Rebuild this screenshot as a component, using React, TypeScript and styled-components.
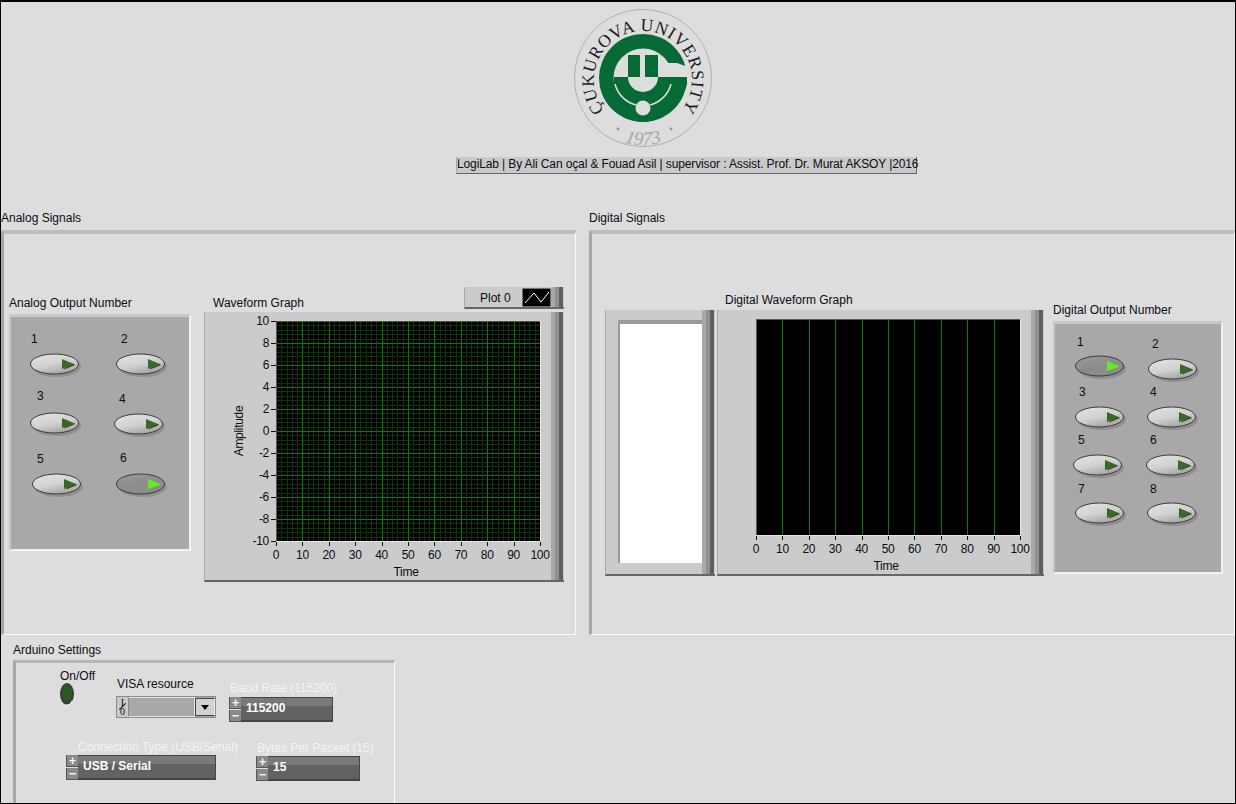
import React from "react";
import styled, { createGlobalStyle } from "styled-components";

const Global = createGlobalStyle`
  html, body { margin: 0; padding: 0; background: #dddddd; }
  * { box-sizing: border-box; }
`;

const UI = `"Liberation Sans", Arial, sans-serif`;

const Panel = styled.div`
  width: 1236px; height: 804px; background: #dddddd; border: 1px solid #000;
  border-top-width: 2px; display: flex; flex-direction: column;
  font-family: ${UI}; font-size: 12px; color: #0c0c14; overflow: hidden;
`;
const Header = styled.header`
  height: 208px; display: flex; flex-direction: column; align-items: center; padding-top: 6px;
`;
const Logo = styled.svg`width: 140px; height: 142px; margin-left: 50px; flex: none;`;
const Caption = styled.div`
  margin: 7px 0 0 137px; width: 461px; height: 17px; line-height: 15px; text-align: center;
  background: #c9c9c9; border-right: 1px solid #666; border-bottom: 1px solid #666; border-left: 1px solid #aaa;
  font-size: 12px; letter-spacing: -0.12px; white-space: nowrap;
`;
const Sections = styled.div`display: flex; gap: 13px; height: 425px;`;
const Section = styled.section<{ $w: number }>`
  width: ${p => p.$w}px; flex: none; display: flex; flex-direction: column;
`;
const SectionLabel = styled.div`height: 20px; line-height: 17px;`;
const Recess = styled.div`
  flex: 1; position: relative;
  border-top: 4px solid #bdbdbd; border-left: 3px solid #a6a6a6;
  border-right: 1px solid #fafafa; border-bottom: 1px solid #fafafa;
`;
const Label = styled.span<{ $x: number; $y: number; $c?: string }>`
  position: absolute; left: ${p => p.$x}px; top: ${p => p.$y}px; line-height: 16px; white-space: nowrap;
  color: ${p => p.$c || "#0c0c14"};
`;
const ButtonBank = styled.div<{ $x: number; $y: number; $w: number; $h: number }>`
  position: absolute; left: ${p => p.$x}px; top: ${p => p.$y}px; width: ${p => p.$w}px; height: ${p => p.$h}px;
  background: #a8a8a8; border-top: 3px solid #c8c8c8; border-left: 2px solid #c8c8c8;
  border-right: 2px solid #f2f2f2; border-bottom: 2px solid #f2f2f2;
`;
const ToggleSvg = styled.svg<{ $x: number; $y: number }>`
  position: absolute; left: ${p => p.$x}px; top: ${p => p.$y}px; width: 54px; height: 28px;
`;
const Frame = styled.div<{ $x: number; $y: number; $w: number; $h: number }>`
  position: absolute; left: ${p => p.$x}px; top: ${p => p.$y}px; width: ${p => p.$w}px; height: ${p => p.$h}px;
  background: #cbcbcb; border-left: 1px solid #a8a8a8; border-bottom: 2px solid #666;
`;
const RightStrips = styled.div`
  position: absolute; right: 0; top: 0; bottom: 0; width: 13px; display: flex;
`;
const Strip = styled.i<{ $w: number; $c: string }>`display: block; width: ${p => p.$w}px; background: ${p => p.$c};`;
const GraphSvg = styled.svg`position: absolute; left: 0; top: 0;`;
const Swatch = styled.svg`position: absolute; left: 57px; top: 1px; width: 29px; height: 19px;`;
const Legend = styled(Frame)`line-height: 22px; padding-left: 15px;`;
const ListWell = styled.div`
  position: absolute; left: 12px; top: 10px; width: 87px; height: 243px; background: #fff;
  border-top: 4px solid #9a9a9a; border-left: 2px solid #9a9a9a;
`;
const SettingsRow = styled.div`height: 168px; position: relative;`;
const SettingsFrame = styled.div`
  position: absolute; left: 12px; top: 25px; width: 382px; height: 160px;
  border-top: 3px solid #b5b5b5; border-left: 3px solid #a6a6a6; border-right: 1px solid #fafafa;
`;
const SettingsLabel = styled.div`position: absolute; left: 12px; top: 7px; line-height: 16px;`;
const Led = styled.svg`position: absolute; left: 42px; top: 18px; width: 18px; height: 26px;`;
const Ring = styled.div<{ $x: number; $y: number; $w: number }>`
  position: absolute; left: ${p => p.$x}px; top: ${p => p.$y}px; width: ${p => p.$w}px; height: 22px;
  background: #a9a9a9; border: 1px solid #8c8c8c; display: flex; align-items: stretch;
`;
const IoTag = styled.div`
  width: 11px; flex: none; background: #c9c9c9; font-family: "Liberation Serif", serif; font-size: 10px;
  line-height: 9px; text-align: center; padding-top: 1px; color: #111; position: relative;
  &::after { content: ""; position: absolute; left: 1px; top: 9px; width: 9px; height: 1px; background: #111; transform: rotate(-45deg); }
`;
const RingField = styled.div`flex: 1; border: 1px solid #e4e4e4; border-left-color: #888; background: #a8a8a8;`;
const RingArrow = styled.div`
  width: 20px; flex: none; background: #d2d2d2; border: 1px solid #444; border-right-color: #eee;
  display: flex; align-items: center; justify-content: center; margin: 1px 0;
  &::after { content: ""; border-left: 4px solid transparent; border-right: 4px solid transparent; border-top: 5px solid #000; }
`;
const Numeric = styled.div<{ $x: number; $y: number; $w: number }>`
  position: absolute; left: ${p => p.$x}px; top: ${p => p.$y}px; width: ${p => p.$w}px; height: 25px; display: flex;
`;
const Stepper = styled.div`width: 12px; flex: none; display: flex; flex-direction: column; gap: 1px;`;
const StepBtn = styled.div`
  flex: 1; background: #8a8a8a; color: #f4f4f4; font: bold 13px/11px "Liberation Sans", sans-serif; text-align: center;
  border-left: 1px solid #555; border-bottom: 1px solid #555;
`;
const NumField = styled.div`
  flex: 1; border-right: 1px solid #444; border-bottom: 2px solid #444; border-top: 1px solid #444;
  background: linear-gradient(#797979 0 38%, #626262 38% 100%);
  color: #fff; font: bold 12px/21px "Liberation Sans", sans-serif; padding-left: 5px;
`;

type TP = { x: number; y: number; on?: boolean };
const Toggle = ({ x, y, on }: TP) => {
  const id = `tg${x}-${y}`;
  return (
    <ToggleSvg $x={x} $y={y} viewBox="0 0 54 28">
      <defs>
        <linearGradient id={id} x1="0.1" y1="0" x2="0.6" y2="1">
          <stop offset="0" stopColor={on ? "#9a9a9a" : "#e2e2e2"} />
          <stop offset="0.55" stopColor={on ? "#8c8c8c" : "#d2d2d2"} />
          <stop offset="1" stopColor={on ? "#8c8c8c" : "#a4a4a4"} />
        </linearGradient>
      </defs>
      <ellipse cx="27.5" cy="15.5" rx="24.5" ry="10.5" fill="#8f8f8f" />
      <ellipse cx="25.5" cy="13" rx="24" ry="10" fill={`url(#${id})`} stroke="#3a3a3a" strokeWidth="1" />
      <path d="M33 8 L46 13.5 L33 18Z" fill={on ? "#62ee1e" : "#376a28"} />
      {!on && <path d="M36 17 L45 13.5 L46 14 L35 18.5Z" fill="#3b2a0c" />}
    </ToggleSvg>
  );
};

const snap = (v: number) => Math.round(v) + 0.5;
type GP = { left: number; top: number; w: number; h: number; yAxis?: boolean; fw: number; fh: number };
const Graph = ({ left, top, w, h, yAxis, fw, fh }: GP) => {
  const xs = Array.from({ length: 11 }, (_, i) => i * 10);
  const ys = Array.from({ length: 11 }, (_, i) => 10 - i * 2);
  return (
    <GraphSvg width={fw} height={fh} fontFamily={UI} fontSize="12" fill="#0c0c14" letterSpacing="-0.3">
      <rect x={left} y={top} width={w} height={h} fill="#000" />
      {yAxis && Array.from({ length: 49 }, (_, i) => (
        <line key={"vm" + i} x1={snap(left + ((i + 1) * w) / 50)} x2={snap(left + ((i + 1) * w) / 50)} y1={top} y2={top + h} stroke="#123212" />
      ))}
      {yAxis && Array.from({ length: 49 }, (_, i) => (
        <line key={"hm" + i} y1={snap(top + ((i + 1) * h) / 50)} y2={snap(top + ((i + 1) * h) / 50)} x1={left} x2={left + w} stroke="#123212" />
      ))}
      {yAxis && ys.slice(1, -1).map((_, i) => (
        <line key={"h" + i} y1={snap(top + ((i + 1) * h) / 10)} y2={snap(top + ((i + 1) * h) / 10)} x1={left} x2={left + w} stroke="#008000" />
      ))}
      {xs.slice(1, -1).map((v, i) => (
        <line key={"v" + i} x1={snap(left + ((i + 1) * w) / 10)} x2={snap(left + ((i + 1) * w) / 10)} y1={top} y2={top + h} stroke="#008000" />
      ))}
      <path d={`M${left + 0.5} ${top + h} V${top + 0.5} H${left + w}`} fill="none" stroke="#555" />
      <path d={`M${left} ${top + h + 0.5} H${left + w + 0.5} V${top}`} fill="none" stroke="#e6e6e6" />
      {xs.map((v, i) => (
        <g key={"t" + v}>
          <line x1={snap(left + (i * w) / 10)} x2={snap(left + (i * w) / 10)} y1={top + h + 1} y2={top + h + 5} stroke="#111" />
          <text x={left + (i * w) / 10} y={top + h + 18} textAnchor="middle">{v}</text>
        </g>
      ))}
      {yAxis && ys.map((v, i) => (
        <g key={"y" + v}>
          <line x1={left - 5} x2={left} y1={snap(top + (i * h) / 10)} y2={snap(top + (i * h) / 10)} stroke="#111" />
          <text x={left - 7} y={top + (i * h) / 10 + 4} textAnchor="end">{v}</text>
        </g>
      ))}
      <text x={left + w / 2 - 2} y={top + h + 35} textAnchor="middle">Time</text>
      {yAxis && <text transform={`translate(${left - 33} ${top + h / 2}) rotate(-90)`} textAnchor="middle">Amplitude</text>}
    </GraphSvg>
  );
};

const analog: [number, number, number, number, number, boolean?][] = [
  [1, 30, 326, 28, 350],
  [2, 120, 326, 114, 350],
  [3, 36, 383, 28, 409],
  [4, 118, 386, 112, 410],
  [5, 36, 446, 30, 470],
  [6, 119, 445, 114, 470, true],
];
const digital: [number, number, number, number, number, boolean?][] = [
  [1, 1077, 334, 1074, 353, true],
  [2, 1152, 336, 1147, 356],
  [3, 1079, 384, 1074, 404],
  [4, 1150, 384, 1146, 404],
  [5, 1078, 432, 1072, 452],
  [6, 1150, 432, 1145, 452],
  [7, 1078, 481, 1074, 500],
  [8, 1150, 481, 1146, 500],
];

export default function App() {
  return (
    <>
      <Global />
      <Panel>
        <Header>
          <Logo viewBox="572 8 140 142">
            <circle cx="642" cy="78" r="68.5" fill="none" stroke="#b0b0b0" strokeWidth="1" />
            <circle cx="642" cy="78" r="44" fill="#066a36" />
            <circle cx="642" cy="78" r="29.5" fill="#dddddd" />
            <path d="M660 63 L676 63 L690 68 L690 77 L660 77Z" fill="#dddddd" />
            <path d="M613 77 H686 V84 C680 105 660 122 642 122 C622 122 612 100 613 77Z" fill="#066a36" />
            <rect x="627" y="55" width="12" height="23" fill="#066a36" />
            <rect x="644" y="55" width="13" height="23" fill="#066a36" />
            <path d="M627 77 H657 A15 15 0 0 1 627 77Z" fill="#dddddd" />
            <path d="M614 84 A29 29 0 0 0 635 105" fill="none" stroke="#dddddd" strokeWidth="1.5" />
            <path d="M670 84 A29 29 0 0 1 649 105" fill="none" stroke="#dddddd" strokeWidth="1.5" />
            <circle cx="642" cy="108" r="7.5" fill="#dddddd" />
            <circle cx="617" cy="129" r="1.4" fill="#9a9a9a" />
            <circle cx="670" cy="129" r="1.4" fill="#9a9a9a" />
            <defs>
              <path id="rim" d="M607.2 114.4 A49 49 0 1 1 676.8 114.4" />
              <path id="rimB" d="M608 135 A62 62 0 0 0 676 135" />
            </defs>
            <text fontFamily="Liberation Serif, serif" fontSize="17.5" fill="#1a1a1a">
              <textPath href="#rim" startOffset="50%" textAnchor="middle" letterSpacing="0.7">ÇUKUROVA UNIVERSITY</textPath>
            </text>
            <text fontFamily="Liberation Serif, serif" fontSize="19" fontStyle="italic" fill="#a8a8a8">
              <textPath href="#rimB" startOffset="50%" textAnchor="middle">1973</textPath>
            </text>
          </Logo>
          <Caption>LogiLab | By Ali Can oçal &amp; Fouad Asil | supervisor : Assist. Prof. Dr. Murat AKSOY |2016</Caption>
        </Header>

        <Sections>
          <Section $w={575}>
            <SectionLabel>Analog Signals</SectionLabel>
            <Recess>
              <Label $x={5} $y={61}>Analog Output Number</Label>
              <ButtonBank $x={5} $y={80} $w={182} $h={237} />
              {analog.map(([n, lx, ly, tx, ty, on]) => (
                <React.Fragment key={n}>
                  <Label $x={lx - 3} $y={ly - 229}>{n}</Label>
                  <Toggle x={tx - 3} y={ty - 233} on={on} />
                </React.Fragment>
              ))}
              <Label $x={209} $y={61}>Waveform Graph</Label>
              <Legend $x={460} $y={53} $w={100} $h={22}>
                Plot 0
                <Swatch viewBox="0 0 29 19">
                  <rect width="29" height="19" fill="#000" stroke="#ddd" />
                  <path d="M3 15 L12 5 L19 14 L27 4" fill="none" stroke="#fff" />
                </Swatch>
                <RightStrips><Strip $w={4} $c="#a8a8a8" /><Strip $w={4} $c="#909090" /><Strip $w={4} $c="#5f5f5f" /></RightStrips>
              </Legend>
              <Frame $x={200} $y={78} $w={360} $h={270}>
                <Graph left={71} top={9} w={264} h={220} yAxis fw={360} fh={270} />
                <RightStrips><Strip $w={4} $c="#a8a8a8" /><Strip $w={4} $c="#909090" /><Strip $w={4} $c="#5f5f5f" /></RightStrips>
              </Frame>
            </Recess>
          </Section>
          <Section $w={646}>
            <SectionLabel>Digital Signals</SectionLabel>
            <Recess>
              <Frame $x={13} $y={76} $w={110} $h={266}>
                <ListWell />
                <RightStrips><Strip $w={4} $c="#a8a8a8" /><Strip $w={4} $c="#909090" /><Strip $w={4} $c="#5f5f5f" /></RightStrips>
              </Frame>
              <Label $x={133} $y={58}>Digital Waveform Graph</Label>
              <Frame $x={125} $y={76} $w={327} $h={266}>
                <Graph left={38} top={9} w={264} h={216} fw={327} fh={266} />
                <RightStrips><Strip $w={4} $c="#a8a8a8" /><Strip $w={4} $c="#909090" /><Strip $w={4} $c="#5f5f5f" /></RightStrips>
              </Frame>
              <Label $x={461} $y={68}>Digital Output Number</Label>
              <ButtonBank $x={461} $y={87} $w={170} $h={253} />
              {digital.map(([n, lx, ly, tx, ty, on]) => (
                <React.Fragment key={n}>
                  <Label $x={lx - 592} $y={ly - 234}>{n}</Label>
                  <Toggle x={tx - 592} y={ty - 234} on={on} />
                </React.Fragment>
              ))}
            </Recess>
          </Section>
        </Sections>

        <SettingsRow>
          <SettingsLabel>Arduino Settings</SettingsLabel>
          <SettingsFrame>
            <Label $x={44} $y={5}>On/Off</Label>
            <Led viewBox="0 0 18 26">
              <ellipse cx="9" cy="13" rx="7" ry="11" fill="#3c3c3c" />
              <ellipse cx="9" cy="12" rx="5" ry="8" fill="#2a5a20" />
              <path d="M14 20 Q12 25 7 24" fill="none" stroke="#fff" />
            </Led>
            <Label $x={101} $y={13}>VISA resource</Label>
            <Ring $x={100} $y={33} $w={100}>
              <IoTag>I<br />0</IoTag>
              <RingField />
              <RingArrow />
            </Ring>
            <Label $x={214} $y={17} $c="#f4f4f4">Baud Rate (115200)</Label>
            <Numeric $x={213} $y={34} $w={104}>
              <Stepper><StepBtn>+</StepBtn><StepBtn>−</StepBtn></Stepper>
              <NumField>115200</NumField>
            </Numeric>
            <Label $x={62} $y={76} $c="#f4f4f4">Connection Type (USB/Serial)</Label>
            <Numeric $x={50} $y={92} $w={150}>
              <Stepper><StepBtn>+</StepBtn><StepBtn>−</StepBtn></Stepper>
              <NumField>USB / Serial</NumField>
            </Numeric>
            <Label $x={241} $y={77} $c="#f4f4f4">Bytes Per Packet (15)</Label>
            <Numeric $x={240} $y={93} $w={104}>
              <Stepper><StepBtn>+</StepBtn><StepBtn>−</StepBtn></Stepper>
              <NumField>15</NumField>
            </Numeric>
          </SettingsFrame>
        </SettingsRow>
      </Panel>
    </>
  );
}
